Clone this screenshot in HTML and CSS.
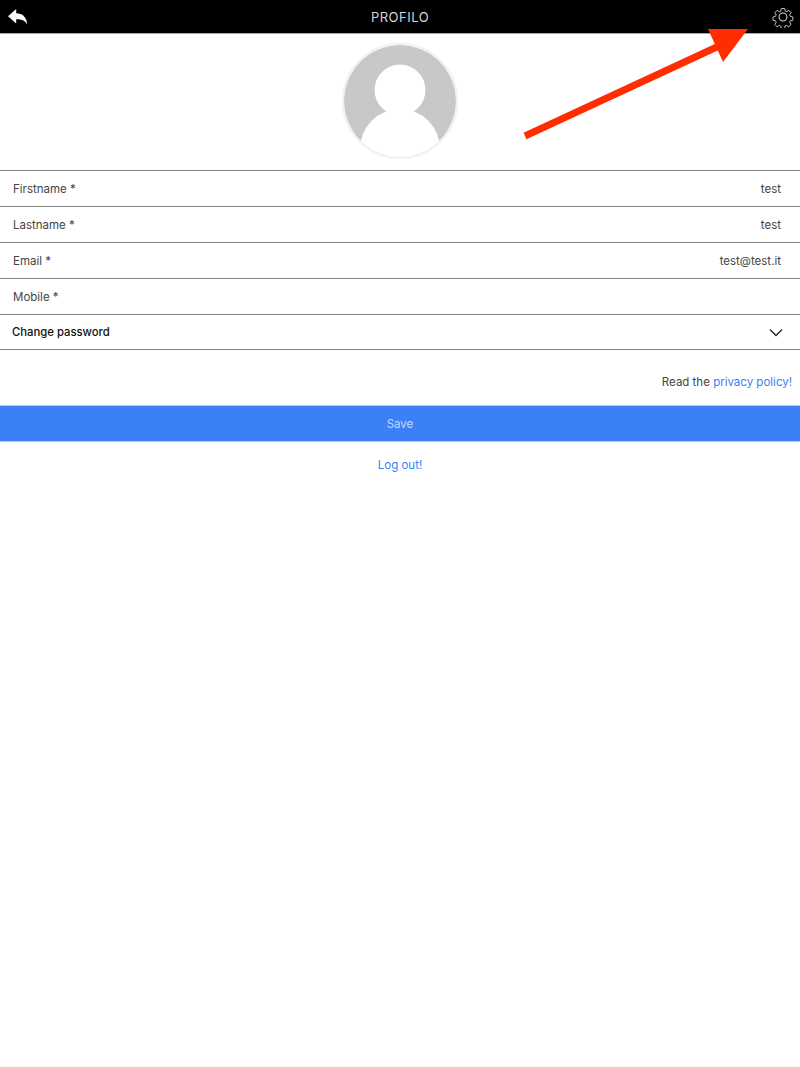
FILE: index.html
```html
<!DOCTYPE html>
<html lang="en">
<head>
<meta charset="utf-8">
<title>Profilo</title>
<link rel="stylesheet" href="styles.css">
</head>
<body>
<header class="topbar">
  <svg class="back" width="20" height="16" viewBox="0 0 20 16"><path fill="#fff" d="M0 7.2 8.2 0v4.2c6 .2 10.6 3.4 11 11.6-1.6-4-5-5.600-11-5.600v4.300z"/></svg>
  <h1 class="title">PROFILO</h1>
  <svg class="gear" width="22" height="22" viewBox="0 0 24 24" fill="none" stroke="#d8d8d8" stroke-width="1.100" stroke-linejoin="round"><circle cx="12" cy="12" r="4.300"/><path d="M10 1.500h4l.7 3.200 1.800.8 2.800-1.700 2.700 2.900-1.700 2.700.8 1.800 3.100.800v4l-3.100.700-.8 1.800 1.700 2.800-2.800 2.800-2.700-1.700-1.900.800-.7 3.100h-4l-.7-3.100-1.800-.8-2.800 1.700-2.800-2.800 1.700-2.800-.8-1.800-3.100-.7v-4l3.100-.8.800-1.800-1.700-2.700 2.800-2.900 2.800 1.700 1.800-.8z" transform="translate(1.440 1.440) scale(.88)"/></svg>
</header>
<main>
  <div class="avatar-wrap">
    <svg class="avatar" width="116" height="116" viewBox="0 0 116 116">
      <defs><clipPath id="disc"><circle cx="58" cy="58" r="56"/></clipPath></defs>
      <circle cx="58" cy="58" r="57" fill="#fff" stroke="#f1f1f1" stroke-width="2"/>
      <g clip-path="url(#disc)">
        <circle cx="58" cy="58" r="56" fill="#c8c8c8"/>
        <circle cx="58" cy="47" r="25.500" fill="#fff"/>
        <circle cx="58" cy="106" r="40" fill="#fff"/>
      </g>
    </svg>
  </div>
  <form class="fields">
    <div class="row"><span>Firstname *</span><span>test</span></div>
    <div class="row"><span>Lastname *</span><span>test</span></div>
    <div class="row"><span>Email *</span><span>test@test.it</span></div>
    <div class="row"><span>Mobile *</span><span></span></div>
    <div class="row row-toggle"><span>Change password</span>
      <svg width="14" height="9" viewBox="0 0 14 9" fill="none" stroke="#222" stroke-width="1.300"><path d="M1 1.500 7 7.500 13 1.500"/></svg>
    </div>
  </form>
  <p class="privacy">Read the <a href="#">privacy policy!</a></p>
  <button class="save" type="button">Save</button>
  <p class="logout"><a href="#">Log out!</a></p>
</main>
<svg class="arrow" width="800" height="150" viewBox="0 0 800 150"><path fill="none" stroke="#ff2d00" stroke-width="7" d="M525 136 719 46"/><path fill="#ff2d00" d="M708 29H748L723 62z"/></svg>
</body>
</html>
```
FILE: styles.css
```css
* { box-sizing: border-box; }
html, body { margin: 0; padding: 0; }
body {
  background: #fff;
  color: #444;
  font-family: Inter, "Open Sans", "Liberation Sans", sans-serif;
  font-size: 11.500px;
  position: relative;
}
.topbar {
  height: 34px;
  background: #000;
  border-bottom: 1px solid #aaa;
  padding: 0 6px 0 8px;
  display: flex;
  align-items: center;
  justify-content: space-between;
  position: relative;
}
.title {
  margin: 0;
  position: absolute;
  left: 0;
  right: 0;
  text-align: center;
  font-size: 13px;
  font-weight: 400;
  color: #d4d4d4;
  letter-spacing: .5px;
  line-height: 34px;
}
.back { display: block; }
.gear { display: block; }
.avatar-wrap {
  height: 136px;
  padding-top: 9px;
  display: flex;
  justify-content: center;
}
.avatar { display: block; }
.fields { border-top: 1px solid #808080; }
.row {
  height: 36px;
  border-bottom: 1px solid #808080;
  padding: 0 19px 0 13px;
  display: flex;
  align-items: center;
  justify-content: space-between;
}
.row-toggle {
  height: 35px;
  padding: 0 17px 0 12px;
  color: #111;
  font-size: 11.300px;
  font-weight: 500;
}
.row-toggle span { margin-bottom: 1px; }
.privacy {
  margin: 0;
  height: 55px;
  padding: 24px 8px 0 0;
  text-align: right;
  line-height: 16px;
}
a { color: #3b80f6; text-decoration: none; }
.save {
  display: block;
  width: 100%;
  height: 37px;
  padding: 0;
  border: 0;
  border-top: 1px solid #a9c8fb;
  border-bottom: 1px solid #a9c8fb;
  background: #3b80f6;
  color: #c4d9fb;
  font: inherit;
}
.logout { margin: 0; padding-top: 15px; text-align: center; line-height: 16px; }
.arrow { position: absolute; left: 0; top: 0; }
```
